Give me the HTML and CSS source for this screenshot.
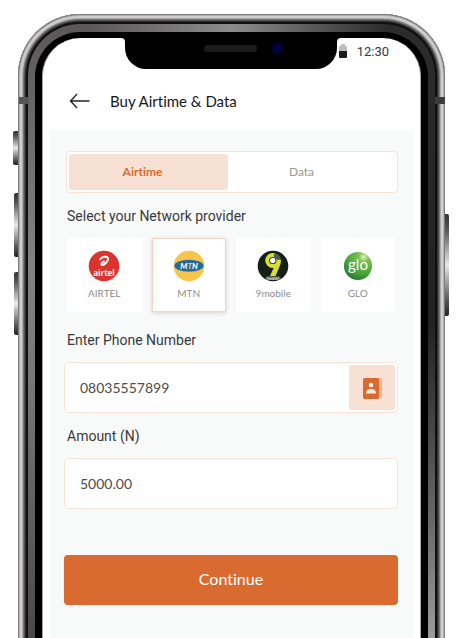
FILE: index.html
```html
<!DOCTYPE html>
<html lang="en">
<head>
<meta charset="utf-8">
<meta name="viewport" content="width=device-width, initial-scale=1">
<title>Buy Airtime &amp; Data</title>
<link rel="stylesheet" href="styles.css">
</head>
<body>
<div class="stage">
  <div class="phone">
    <span class="key key-mute"></span>
    <span class="key key-up"></span>
    <span class="key key-down"></span>
    <span class="key key-power"></span>
    <span class="antenna antenna-left"></span>
    <span class="antenna antenna-right"></span>
    <div class="band">
      <div class="bezel">
        <div class="notch">
          <svg class="flare flare-left" width="4" height="4" viewBox="0 0 4 4"><path d="M4 0H0Q4 0 4 4Z"/></svg>
          <svg class="flare flare-right" width="4" height="4" viewBox="0 0 4 4"><path d="M0 0H4Q0 0 0 4Z"/></svg>
          <span class="speaker"></span><span class="camera"></span>
        </div>
        <div class="screen">
          <div class="status">
            <svg width="8" height="14" viewBox="0 0 8 14" aria-hidden="true"><path fill="#bdbdbd" d="M0 3Q0 2 1 2H2V0H6V2H7Q8 2 8 3V7H0Z"/><path fill="#1b1b1b" d="M0 7H8V13Q8 14 7 14H1Q0 14 0 13Z"/></svg>
            <time>12:30</time>
          </div>
          <header class="appbar">
            <button class="back" type="button" aria-label="Back">
              <svg width="21" height="16" viewBox="0 0 21 16"><path d="M20.500 8H1.500M8 1L1.500 8L8 15" fill="none" stroke="#24262b" stroke-width="1.400"/></svg>
            </button>
            <h1>Buy Airtime &amp; Data</h1>
          </header>
          <main>
            <form class="form">
              <div class="tabs" role="tablist">
                <button class="tab active" type="button" role="tab" aria-selected="true">Airtime</button>
                <button class="tab" type="button" role="tab" aria-selected="false">Data</button>
              </div>
              <fieldset>
                <legend class="label">Select your Network provider</legend>
                <div class="networks">
                  <label class="network"><input type="radio" name="network">
                    <svg width="32" height="32" viewBox="0 0 32 32" aria-hidden="true"><circle cx="16" cy="16" r="15.300" fill="#dc332e"/><path d="M12 9.500C14 6.500 19.500 5.500 20 8.500C20.300 11 17 14.500 14.500 15C12.500 15.200 13 12.500 16 11.500" fill="none" stroke="#fff" stroke-width="1.900" stroke-linecap="round"/><text x="16" y="25.500" class="logo-airtel">airtel</text></svg>
                    <span>AIRTEL</span></label>
                  <label class="network"><input type="radio" name="network" checked>
                    <svg width="32" height="32" viewBox="0 0 32 32" aria-hidden="true"><circle cx="16" cy="16" r="15.300" fill="#f8c548"/><ellipse cx="16" cy="15.700" rx="15" ry="6.300" fill="#27699a" stroke="#e8d488" stroke-width=".6"/><text x="16" y="18.500" class="logo-mtn">M<tspan fill="#f8c548">T</tspan>N</text></svg>
                    <span>MTN</span></label>
                  <label class="network"><input type="radio" name="network">
                    <svg width="32" height="32" viewBox="0 0 32 32" aria-hidden="true"><circle cx="16" cy="16" r="15.300" fill="#141f16"/><path d="M18 10H24Q24 14 22 18L18.500 26H13L17 17Z" fill="#d7df32"/><circle cx="15.800" cy="10.500" r="5.600" fill="#10170e" stroke="#d7df32" stroke-width="4"/><path d="M17.500 3Q23.500 4.500 23.800 9.500L20 10Q19.500 7.500 16.800 6.800Z" fill="#50584f"/><circle cx="15.800" cy="10.500" r="2.700" fill="#fff"/><path d="M8 28L10 26.500H22L24 28L20 30H12Z" fill="#777d76"/><text x="16" y="29.500" class="logo-9">mobile</text></svg>
                    <span>9mobile</span></label>
                  <label class="network"><input type="radio" name="network">
                    <svg width="32" height="32" viewBox="0 0 32 32" aria-hidden="true"><defs><radialGradient id="glo" cx=".7" cy=".18" r=".85"><stop offset="0" stop-color="#e2f5bc"/><stop offset=".22" stop-color="#79c04d"/><stop offset=".7" stop-color="#49a43b"/><stop offset="1" stop-color="#2c7c31"/></radialGradient></defs><circle cx="16" cy="16" r="14" fill="url(#glo)"/><text x="16" y="20" class="logo-glo">glo</text></svg>
                    <span>GLO</span></label>
                </div>
              </fieldset>
              <label class="label" for="phone">Enter Phone Number</label>
              <div class="field">
                <input id="phone" type="tel" value="08035557899">
                <button class="contacts" type="button" aria-label="Choose from contacts">
                  <svg width="20" height="22" viewBox="0 0 20 22"><rect x="3" y="1" width="17" height="20" rx="2" fill="#ecb294"/><rect x="1" y="1" width="16" height="21" rx="1.500" fill="#d96b31"/><circle cx="9" cy="8" r="2.200" fill="#fff"/><path d="M4 16.500Q4 12 9 12T14 16.500Z" fill="#fbe9e0"/></svg>
                </button>
              </div>
              <label class="label" for="amount">Amount (N)</label>
              <div class="field"><input id="amount" type="text" inputmode="decimal" value="5000.00"></div>
              <button class="continue" type="submit">Continue</button>
            </form>
          </main>
        </div>
      </div>
    </div>
  </div>
</div>
</body>
</html>
```

FILE: styles.css
```css
* { box-sizing: border-box; }
body { margin: 0; background: #fff; color: #38393c; font-family: Roboto, sans-serif; }
button, input { color: inherit; }
button { border: 0; padding: 0; background: none; cursor: pointer; }

.stage { height: 100vh; overflow: hidden; padding: 14px 25px 0 18px; }

/* Device frame */
.phone {
  position: relative;
  padding: 10px 10px 0;
  border-radius: 62px 62px 0 0;
  background: #0f0f0f;
  box-shadow:
    inset 0 0 0 1px #7c7c7c, inset 0 0 0 2px #b0b0b0, inset 0 0 0 4px #d0cece,
    inset 0 0 0 5px #a9a9a9, inset 0 0 0 6px #777, inset 0 0 0 7px #505050,
    inset 0 0 0 8px #303030;
}
.band {
  padding: 8px 7px 0;
  border-radius: 52px 52px 0 0;
  background:
    linear-gradient(90deg, #5c5859 15%, #8c8c8c 50%, #2c2c2c 88%) top / 100% 8px no-repeat,
    linear-gradient(#5c5859 0, #666 80px, #828282 240px, #777 360px, #4b4849 610px) left / 50% 100% no-repeat,
    linear-gradient(#2c2c2c 0, #222 300px, #444 400px, #666 490px, #999 610px) right / 50% 100% no-repeat;
}
.bezel { position: relative; padding: 6px 7px 0; border-radius: 45px 45px 0 0; background: #000; }
.screen {
  min-height: 100vh;
  border: solid #aaa;
  border-width: 0 1px;
  border-radius: 38px 38px 0 0;
  background: #fff;
}
.notch {
  position: absolute;
  top: 0;
  left: 50%;
  width: 212px;
  height: 37px;
  margin-left: -107px;
  border-radius: 0 0 21px 21px;
  background: #000;
}
.flare { position: absolute; top: 6px; }
.flare-left { right: 100%; }
.flare-right { left: 100%; }
.speaker { position: absolute; left: 79px; top: 13px; width: 53px; height: 7px; border-radius: 4px; background: #1b1b1b; }
.camera { position: absolute; left: 147px; top: 11px; width: 11px; height: 11px; border-radius: 50%; background: #020240; }

.key { position: absolute; right: 100%; width: 4px; border-radius: 2px 0 0 2px; background: linear-gradient(#333, #555 15%, #e8e8e8 50%, #555 85%, #222); }
.key-mute { top: 117px; width: 5px; height: 34px; }
.key-up { top: 179px; height: 64px; }
.key-down { top: 258px; height: 63px; }
.key-power { top: 200px; right: auto; left: 100%; height: 102px; border-radius: 0 2px 2px 0; }
.antenna { position: absolute; top: 83px; width: 10px; height: 7px; background: #565656; }
.antenna-left { left: 1px; }
.antenna-right { right: 0; background: #3c3c3c; }

/* App header */
.status { display: flex; justify-content: flex-end; align-items: center; gap: 10px; height: 26px; padding-right: 31px; font-size: 13px; }
.appbar { display: flex; align-items: center; gap: 20px; height: 66px; padding: 8px 26px 0; }
.back { display: flex; }
h1, .tab, .network, .field input, .continue { font-family: Lato, sans-serif; font-variant-ligatures: none; }
h1 { margin: 0; color: #16181d; font-size: 15px; font-weight: 400; line-height: 20px; }

/* Form */
main { margin: 0 7px; min-height: 100vh; background: #f8faf9; }
.form { display: flex; flex-direction: column; padding: 21px 15px 21px 14px; }
.tabs { display: grid; grid-template-columns: 1fr 1fr; margin-left: 2px; padding: 2px 10px 2px 2px; border: 1px solid #fbe2d7; border-radius: 4px; background: #fff; }
.tab { height: 36px; padding-right: 12px; border-radius: 3px; color: #999; font-size: 12px; line-height: 16px; }
.tab.active { background: #f7e0d4; color: #dc6b32; font-weight: 700; }
fieldset { min-width: 0; margin: 0; padding: 0; border: 0; }
.label { padding: 0 3px; font-size: 14px; line-height: 20px; }
.tabs + fieldset { margin-top: 13px; }
.networks { display: flex; gap: 10px; margin: 12px 3px 18px; }
.network {
  position: relative;
  flex: 1;
  display: flex;
  flex-direction: column;
  align-items: center;
  gap: 3px;
  height: 74px;
  padding-top: 12px;
  background: #fff;
  color: #8e8e8e;
  font-size: 10px;
  line-height: 16px;
}
.network input { position: absolute; inset: 0; width: 100%; height: 100%; margin: 0; appearance: none; cursor: pointer; }
.network:has(:checked) { box-shadow: inset 0 0 0 1px #f5d5c5, 0 1px 4px #dccfc9; }
.logo-airtel { fill: #fff; font: 700 8px "Open Sans", sans-serif; text-anchor: middle; }
.logo-mtn { fill: #fff; font: italic 900 8px Lato, sans-serif; text-anchor: middle; }
.logo-9 { fill: #ddd; font: 400 4px Roboto, sans-serif; text-anchor: middle; }
.logo-glo { fill: #fff; font: 400 15px Lato, sans-serif; text-anchor: middle; }

.field { display: flex; height: 51px; margin: 12px 0 13px; padding: 2px; border: 1px solid #fbe2d7; border-radius: 4px; background: #fff; }
.field input { flex: 1; min-width: 0; padding: 0 13px; border: 0; outline: 0; background: none; color: #4c4c4c; font-size: 14px; line-height: 20px; }
.contacts { display: flex; align-items: center; justify-content: center; width: 46px; border-radius: 3px; background: #f7e0d4; }
.continue { height: 50px; margin-top: 33px; padding-bottom: 2px; border-radius: 4px; background: #d96b31; color: #fff; font-size: 16px; line-height: 20px; }
```
